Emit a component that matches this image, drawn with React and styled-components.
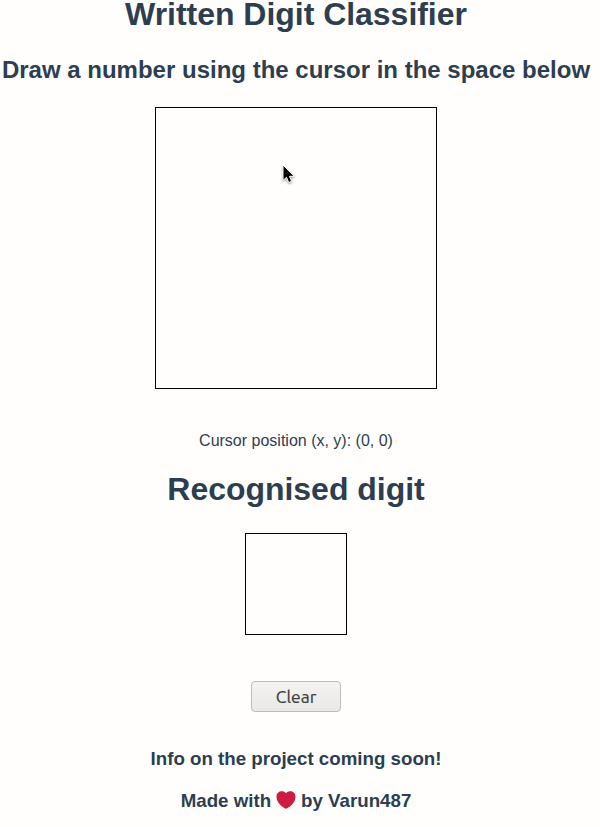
import React from 'react';
import styled, { createGlobalStyle } from 'styled-components';

const GlobalStyle = createGlobalStyle`
  html, body { margin: 0; background: #fffefd; overflow: hidden; }
`;
const Page = styled.main`
  position: relative;
  width: 592px;
  height: 827px;
  display: flex;
  flex-direction: column;
  align-items: center;
  font-family: "Liberation Sans", Arial, sans-serif;
  color: #2c3e50;
  white-space: nowrap;
`;
const Title = styled.h1`
  margin: ${p => p.$top}px 0 0;
  font-size: 32px;
  line-height: 28px;
  letter-spacing: -0.03px;
`;
const Prompt = styled.h2`
  margin: 28px 0 0;
  font-size: 24px;
  line-height: 28px;
`;
const Board = styled.div`
  box-sizing: border-box;
  flex: none;
  width: ${p => p.$size}px;
  height: ${p => p.$size}px;
  margin-top: ${p => p.$top}px;
  border: 1px solid #000;
`;
const Position = styled.p`
  margin: 43px 0 0;
  font-size: 16px;
  line-height: 18px;
`;
const ClearButton = styled.button`
  box-sizing: border-box;
  width: 90px;
  height: 31px;
  margin-top: 46px;
  padding: 0;
  border: 1px solid #c0bcb7;
  border-radius: 4px;
  background: linear-gradient(#f4f3f1, #e9e8e5);
  color: #3c3c3c;
  font: 17.5px Ubuntu, "Noto Sans", sans-serif;
  -webkit-text-stroke: 0.2px #3c3c3c;
`;
const Note = styled.h3`
  display: flex;
  align-items: center;
  gap: 5px;
  margin: ${p => p.$top}px 0 0;
  font-size: 18.72px;
  line-height: 22px;
`;
const Heart = styled.svg`
  display: block;
  margin-top: -2px;
`;
const Pointer = styled.svg`
  position: absolute;
  left: 281px;
  top: 164px;
  filter: drop-shadow(0.5px 1px 1px rgba(0, 0, 0, 0.4));
`;

export default function App() {
  return (
    <Page>
      <GlobalStyle />
      <Title $top={0}>Written Digit Classifier</Title>
      <Prompt>Draw a number using the cursor in the space below</Prompt>
      <Board $size={282} $top={23} />
      <Position>Cursor position (x, y): (0, 0)</Position>
      <Title $top={25}>Recognised digit</Title>
      <Board $size={102} $top={30} />
      <ClearButton>Clear</ClearButton>
      <Note $top={36}>Info on the project coming soon!</Note>
      <Note $top={20}>
        Made with
        <Heart width="20" height="18" viewBox="0 0 20 18">
          <path d="M10 17.700C7 17 0.500 12 0.500 5.800C0.500 0.200 6.800-1.300 10 2.300C13.200-1.300 19.500 0.200 19.500 5.800C19.500 12 13 17 10 17.700Z" fill="#cf1a41" />
        </Heart>
        by Varun487
      </Note>
      <Pointer width="15" height="20" viewBox="0 0 15 20">
        <path d="M2 1V16.500L5.500 13.300L7.700 18.500L10.600 17.300L8.500 12.300H13.200Z" fill="#000" stroke="#fff" strokeWidth="1" />
      </Pointer>
    </Page>
  );
}
